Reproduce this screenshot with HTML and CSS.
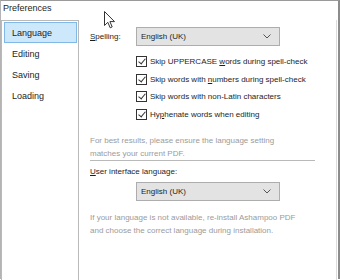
FILE: index.html
```html
<!DOCTYPE html>
<html lang="en">
<head>
    <meta charset="UTF-8">
    <title>Preferences</title>
    <link rel="stylesheet" href="styles.css">
</head>
<body>
    <div class="dialog">
        <div class="title">Preferences</div>

        <div class="main">
            <div class="sidebar">
                <div class="menu-item active">Language</div>
                <div class="menu-item">Editing</div>
                <div class="menu-item">Saving</div>
                <div class="menu-item">Loading</div>
            </div>

            <div class="content">
                <!-- Spelling -->
                <div class="row">
                    <span class="field-label"><u>S</u>pelling:</span>
                    <div class="select">
                        <span>English (UK)</span>
                        <svg class="chevron" width="8" height="5" viewBox="0 0 8 5"><path d="M0.5 0.5 L4 4 L7.5 0.5" fill="none" stroke="#555" stroke-width="1"/></svg>
                    </div>
                </div>

                <div class="checks">
                    <div class="check"><span class="box"></span><span>Skip UPPERCASE <u>w</u>ords during spell-check</span></div>
                    <div class="check"><span class="box"></span><span>Skip words with <u>n</u>umbers during spell-check</span></div>
                    <div class="check"><span class="box"></span><span>Skip words with non-Latin characters</span></div>
                    <div class="check"><span class="box"></span><span>Hy<u>p</u>henate words when editing</span></div>
                </div>

                <p class="hint first">For best results, please ensure the language setting matches your current PDF.</p>

                <div class="separator"></div>

                <div class="section-label"><u>U</u>ser interface language:</div>
                <div class="select indented">
                    <span>English (UK)</span>
                    <svg class="chevron" width="8" height="5" viewBox="0 0 8 5"><path d="M0.5 0.5 L4 4 L7.5 0.5" fill="none" stroke="#555" stroke-width="1"/></svg>
                </div>

                <p class="hint">If your language is not available, re-install Ashampoo PDF and choose the correct language during installation.</p>
            </div>
        </div>
    </div>

    <!-- mouse pointer over the dialog -->
    <svg class="cursor" width="12" height="18" viewBox="0 0 12 18">
        <path d="M0.5 0.5 L0.5 14.5 L3.8 11.3 L6.2 16.8 L8.2 15.9 L5.9 10.6 L10.5 10.6 Z" fill="#fff" stroke="#333" stroke-width="1" stroke-linejoin="round"/>
    </svg>
</body>
</html>
```

FILE: styles.css
```css
body {
    margin: 0;
    width: 340px;
    height: 280px;
    overflow: hidden;
    background: #fff;
    font-family: 'Liberation Sans', Arial, sans-serif;
    color: #1e1e1e;
    position: relative;
}
.dialog {
    height: 279px;
    border-top: 1px solid #9a9a9a;
    border-left: 1px solid #b4b4b4;
    border-right: 2px solid #8c8c8c;
    box-sizing: border-box;
}
.title {
    height: 19px;
    line-height: 15px;
    padding-left: 2px;
    font-size: 9px;
}
.main {
    display: flex;
    height: 260px;
}
.sidebar {
    width: 78px;
    border: 1px solid #b9b9b9;
    border-bottom: none;
    padding: 1px 1px 0 2px;
    box-sizing: border-box;
}
.menu-item {
    height: 21px;
    line-height: 21px;
    padding-left: 7px;
    font-size: 9px;
    border: 1px solid transparent;
    box-sizing: border-box;
}
.menu-item.active {
    background: #cde8fb;
    border-color: #80b8e8;
}
.content {
    flex: 1;
    padding: 7px 0 0 11px;
    margin-right: 1px;
    border-right: 1px solid #dcdcdc;
    font-size: 8px;
}
.row {
    display: flex;
    align-items: center;
    height: 19px;
}
.field-label {
    width: 46px;
}
.section-label {
    height: 12px;
}
.select {
    display: flex;
    align-items: center;
    justify-content: space-between;
    width: 144px;
    height: 19px;
    padding: 0 8px 0 4px;
    border: 1px solid #adadad;
    background: #e3e3e3;
    box-sizing: border-box;
}
.select.indented {
    margin: 3px 0 0 46px;
}
.checks {
    margin: 7px 0 0 46px;
}
.check {
    display: flex;
    align-items: center;
    height: 17.6px;
}
.box {
    width: 9px;
    height: 9px;
    border: 1px solid #333;
    margin-right: 3px;
    position: relative;
    flex: none;
}
.box::after {
    content: "";
    position: absolute;
    left: 2.5px;
    top: 0px;
    width: 3px;
    height: 6px;
    border: solid #333;
    border-width: 0 1px 1px 0;
    transform: rotate(40deg);
}
.hint {
    color: #9b9b9b;
    line-height: 13px;
    margin: 10px 0 0;
    width: 215px;
}
.hint.first {
    margin-top: 11px;
}
.separator {
    height: 1px;
    background: #b9b9b9;
    width: 225px;
    margin: 0 0 6px;
}
.cursor {
    position: absolute;
    left: 104px;
    top: 11px;
}
```
